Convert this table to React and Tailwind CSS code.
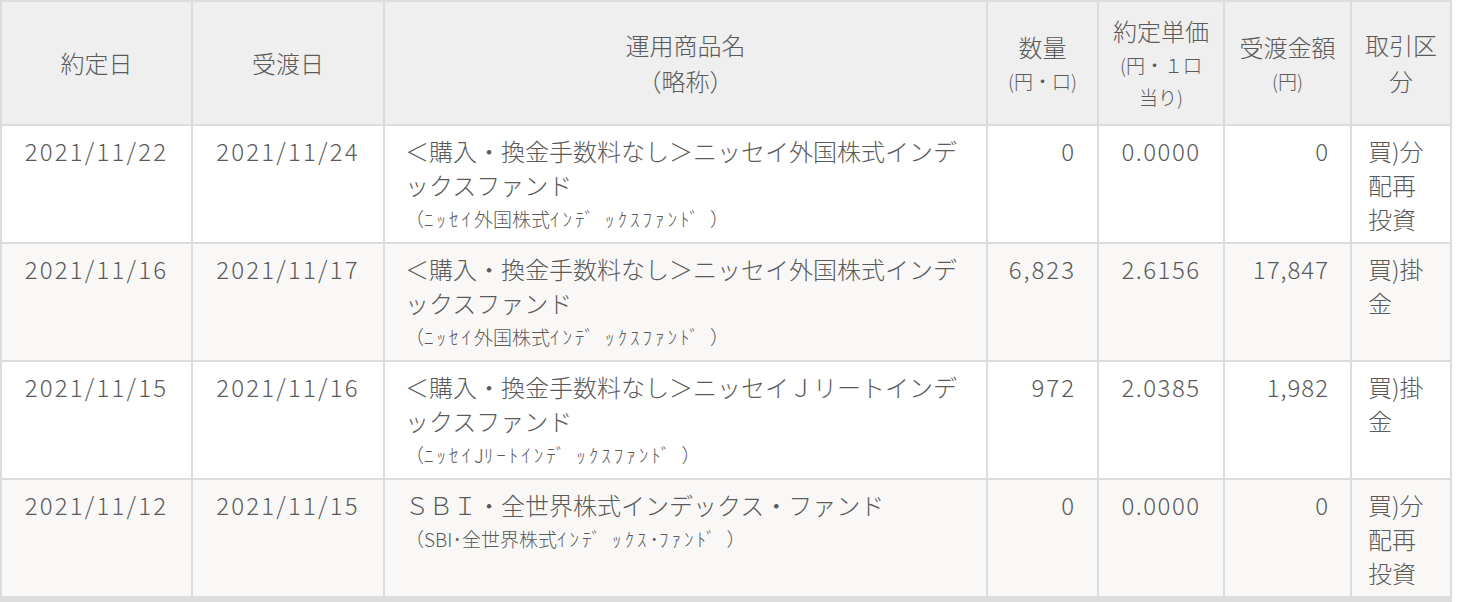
import React from "react";

const rows = [
  {
    d1: "2021/11/22",
    d2: "2021/11/24",
    n1: "＜購入・換金手数料なし＞ニッセイ外国株式インデ",
    n2: "ックスファンド",
    ab: "（ﾆｯｾｲ外国株式ｲﾝﾃﾞｯｸｽﾌｧﾝﾄﾞ）",
    qty: "0",
    price: "0.0000",
    amt: "0",
    kind: ["買)分", "配再", "投資"],
  },
  {
    d1: "2021/11/16",
    d2: "2021/11/17",
    n1: "＜購入・換金手数料なし＞ニッセイ外国株式インデ",
    n2: "ックスファンド",
    ab: "（ﾆｯｾｲ外国株式ｲﾝﾃﾞｯｸｽﾌｧﾝﾄﾞ）",
    qty: "6,823",
    price: "2.6156",
    amt: "17,847",
    kind: ["買)掛", "金"],
  },
  {
    d1: "2021/11/15",
    d2: "2021/11/16",
    n1: "＜購入・換金手数料なし＞ニッセイＪリートインデ",
    n2: "ックスファンド",
    ab: "（ﾆｯｾｲJﾘｰﾄｲﾝﾃﾞｯｸｽﾌｧﾝﾄﾞ）",
    qty: "972",
    price: "2.0385",
    amt: "1,982",
    kind: ["買)掛", "金"],
  },
  {
    d1: "2021/11/12",
    d2: "2021/11/15",
    n1: "ＳＢＩ・全世界株式インデックス・ファンド",
    n2: null,
    ab: "（SBI･全世界株式ｲﾝﾃﾞｯｸｽ･ﾌｧﾝﾄﾞ）",
    qty: "0",
    price: "0.0000",
    amt: "0",
    kind: ["買)分", "配再", "投資"],
  },
];

// split into runs: half-width kana vs everything else
function segments(text) {
  const out = [];
  for (const ch of text) {
    const code = ch.charCodeAt(0);
    const kana = code >= 0xff66 && code <= 0xff9d;
    const type = ch === "ﾞ" ? "dak" : kana ? "kana" : "other";
    const last = out[out.length - 1];
    if (last && last.type === type && type !== "dak") last.s += ch;
    else out.push({ type, s: ch });
  }
  return out;
}

function Abbr({ text }) {
  return (
    <>
      {segments(text).map((seg, i) => {
        if (seg.type === "dak")
          return (
            <span key={i} className="tracking-[3px] mr-[8px]">
              {seg.s}
            </span>
          );
        if (seg.type === "kana")
          return (
            <span key={i} className="tracking-[3px]">
              {seg.s}
            </span>
          );
        return <span key={i}>{seg.s}</span>;
      })}
    </>
  );
}

const hcell =
  "h-[124px] bg-[#efefef] border-r-2 border-b-2 border-[#dcdcdc] flex flex-col items-center justify-center text-center";
const main = "text-[24px] leading-[36px]";
const sub = "text-[19px] leading-[32px]";

export default function App() {
  return (
    <div className="bg-white w-[1458px] h-[602px] overflow-hidden font-['Noto_Sans_CJK_JP','Noto_Sans',sans-serif] font-light text-[#5a5a5a]">
      <div className="w-[1452px] grid grid-cols-[191px_192px_603px_111px_126px_127px_100px] border-l-2 border-t-2 border-b-4 border-[#dcdcdc]">
        <div className={hcell}>
          <div className={main}>約定日</div>
        </div>
        <div className={hcell}>
          <div className={main}>受渡日</div>
        </div>
        <div className={hcell}>
          <div className={main}>運用商品名</div>
          <div className={main}>（略称）</div>
        </div>
        <div className={hcell}>
          <div className={main}>数量</div>
          <div className={sub}>(円・口)</div>
        </div>
        <div className={hcell}>
          <div className={main}>約定単価</div>
          <div className={sub}>(円・１口</div>
          <div className={sub}>当り)</div>
        </div>
        <div className={hcell}>
          <div className={main}>受渡金額</div>
          <div className={sub}>(円)</div>
        </div>
        <div className={hcell}>
          <div className={main}>取引区</div>
          <div className={main}>分</div>
        </div>

        {rows.map((r, i) => {
          const bg = i % 2 === 1 ? "bg-[#f9f8f7]" : "bg-white";
          const cell = `${bg} border-r-2 border-b-2 border-[#dcdcdc] pt-2 pb-[6px] text-[24px] leading-[34px]`;
          return (
            <React.Fragment key={i}>
              <div className={`${cell} text-center tracking-[2.2px]`}>{r.d1}</div>
              <div className={`${cell} text-center tracking-[2.2px]`}>{r.d2}</div>
              <div className={`${cell} pl-5 pr-2`}>
                <div>{r.n1}</div>
                {r.n2 && <div>{r.n2}</div>}
                <div className="text-[19px] leading-[34px]">
                  <Abbr text={r.ab} />
                </div>
              </div>
              <div className={`${cell} text-right pr-[21px] tracking-[2px]`}>{r.qty}</div>
              <div className={`${cell} text-center tracking-[1.5px]`}>{r.price}</div>
              <div className={`${cell} text-right pr-[21px] tracking-[1px]`}>{r.amt}</div>
              <div className={`${cell} pl-4 pr-2`}>
                {r.kind.map((k, j) => (
                  <div key={j}>{k}</div>
                ))}
              </div>
            </React.Fragment>
          );
        })}
      </div>
    </div>
  );
}
